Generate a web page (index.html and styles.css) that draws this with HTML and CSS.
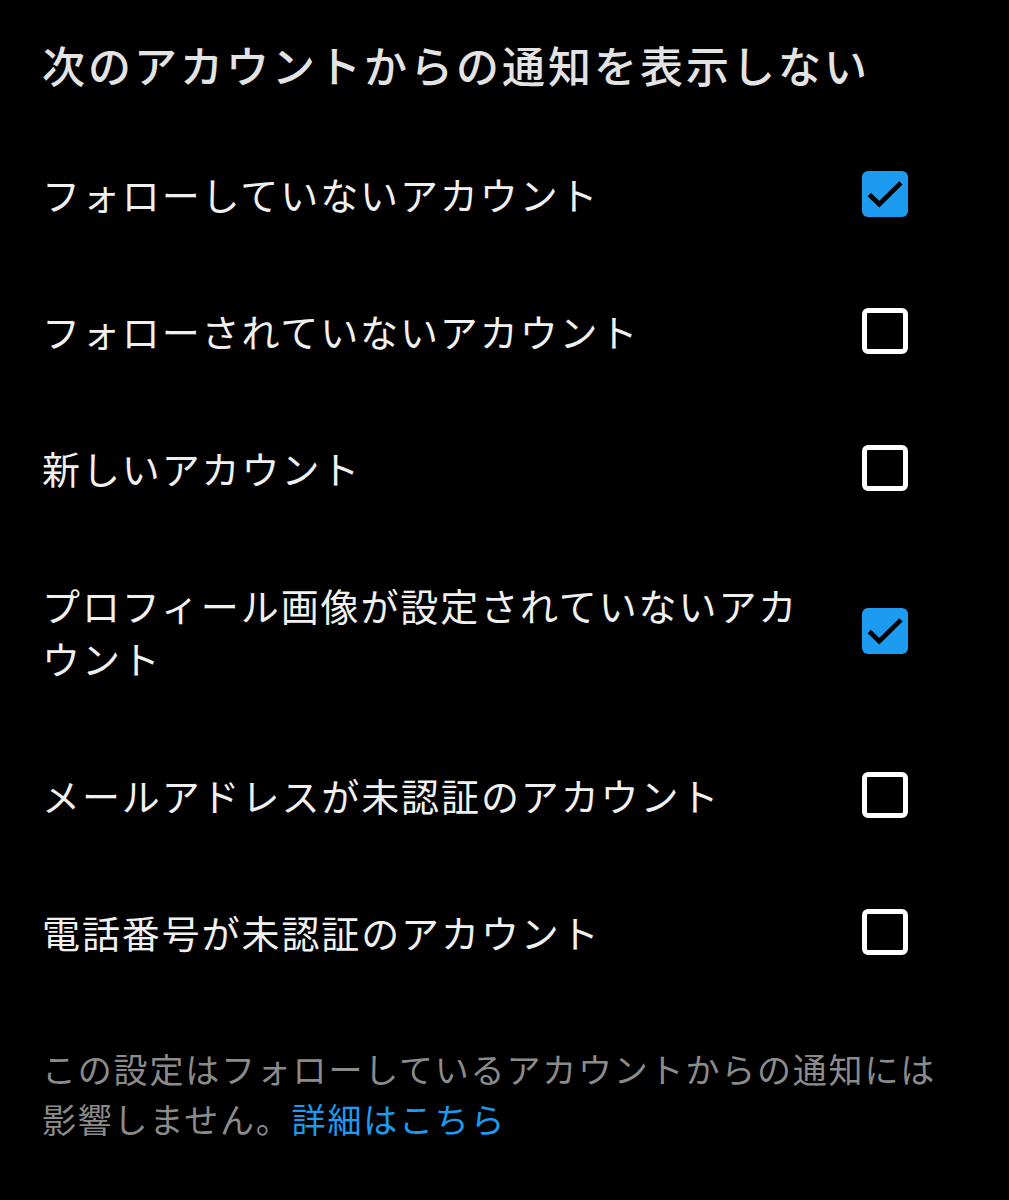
FILE: index.html
```html
<!DOCTYPE html>
<html lang="ja">
<head>
    <meta charset="UTF-8">
    <meta name="viewport" content="width=device-width, initial-scale=1.0">
    <title>通知フィルター</title>
    <link rel="stylesheet" href="styles.css">
</head>
<body>
    <main class="settings">
        <h1 class="settings-title">次のアカウントからの通知を表示しない</h1>
        <ul class="option-list">
            <li class="option">
                <span class="option-label">フォローしていないアカウント</span>
                <span class="check checked"><svg viewBox="0 0 24 24"><path d="M3.8 12.3L9 17.3L20.3 6.2"/></svg></span>
            </li>
            <li class="option">
                <span class="option-label">フォローされていないアカウント</span>
                <span class="check"></span>
            </li>
            <li class="option">
                <span class="option-label">新しいアカウント</span>
                <span class="check"></span>
            </li>
            <li class="option">
                <span class="option-label">プロフィール画像が設定されていないアカウント</span>
                <span class="check checked"><svg viewBox="0 0 24 24"><path d="M3.8 12.3L9 17.3L20.3 6.2"/></svg></span>
            </li>
            <li class="option">
                <span class="option-label">メールアドレスが未認証のアカウント</span>
                <span class="check"></span>
            </li>
            <li class="option">
                <span class="option-label">電話番号が未認証のアカウント</span>
                <span class="check"></span>
            </li>
        </ul>
        <p class="note">この設定はフォローしているアカウントからの通知には影響しません。<a href="#" class="note-link">詳細はこちら</a></p>
    </main>
</body>
</html>
```

FILE: styles.css
```css
body {
    margin: 0;
    background-color: #000;
    color: #f0f0f0;
    font-family: "Noto Sans CJK JP", "Noto Sans", sans-serif;
}
.settings {
    padding: 34px 40px 0 42px;
}
.settings-title {
    margin: 0;
    font-size: 43px;
    font-weight: 500;
    line-height: 60px;
    letter-spacing: 3px;
    color: #e3e3e3;
    white-space: nowrap;
}
.option-list {
    list-style: none;
    margin: 31px 0 0;
    padding: 0 61px 0 0;
}
.option {
    display: flex;
    justify-content: space-between;
    align-items: center;
    padding: 42px 0;
}
.option-label {
    max-width: 780px;
    font-size: 38px;
    line-height: 53px;
    letter-spacing: 1.9px;
}
.check {
    flex: none;
    width: 46px;
    height: 46px;
    box-sizing: border-box;
    border: 5px solid #fff;
    border-radius: 6px;
    display: flex;
    align-items: center;
    justify-content: center;
}
.check.checked {
    border: none;
    background: #1d9bf0;
}
.check svg {
    width: 46px;
    height: 46px;
    fill: none;
    stroke: #000;
    stroke-width: 2.5;
}
.note {
    margin: 44px 0 0;
    font-size: 34px;
    line-height: 50px;
    letter-spacing: 1.8px;
    color: #8b8b8b;
}
.note-link {
    color: #1d9bf0;
    text-decoration: none;
}
```
